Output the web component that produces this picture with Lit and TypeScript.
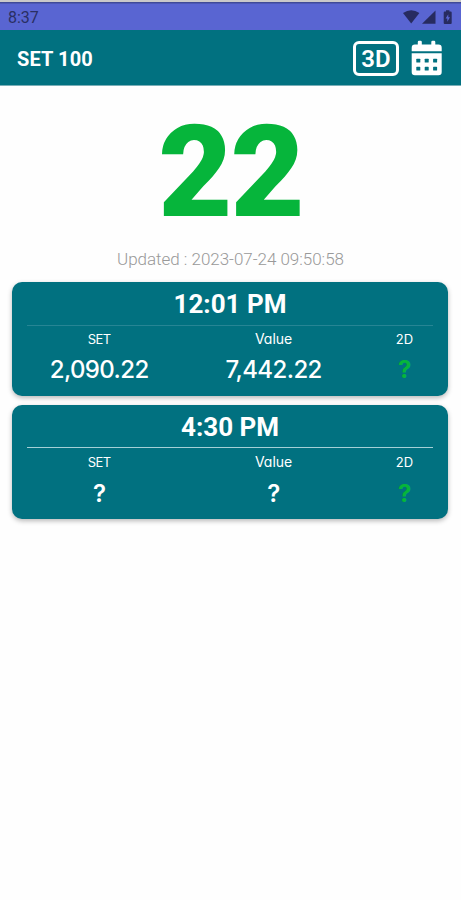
import { LitElement, html, css, svg } from "lit";
import { customElement, property } from "lit/decorators.js";

@customElement("status-bar")
class StatusBar extends LitElement {
  static styles = css`
    :host {
      display: flex;
      box-sizing: border-box;
      height: 30px;
      padding: 4px 7px 0 8px;
      align-items: center;
      justify-content: space-between;
      border-top: 2px solid #c9c8ca;
      background: linear-gradient(#3f4a98 0 1px, #5965d2 2px);
      color: #2a2f63;
      font: 400 16px/22px Roboto, sans-serif;
    }
    .icons {
      display: block;
    }
  `;

  render() {
    return html`
      <span>8:37</span>
      <svg class="icons" width="51" height="16" viewBox="0 0 51 16" fill="#272b60">
        <path d="M0 3Q8.2-2.6 16.4 3L8.2 13.6Z" />
        <path d="M32.5 .4V13.8H19Z" />
        <path
          fill-rule="evenodd"
          d="M43 .2h3.4v1.3h1.3q1 0 1 1V13q0 1-1 1h-6q-1 0-1-1V2.5q0-1 1-1H43ZM45.3 4.2L42.6 8.6h1.7v3.2L47 7.3h-1.7Z"
        />
      </svg>
    `;
  }
}

@customElement("title-bar")
class TitleBar extends LitElement {
  static styles = css`
    :host {
      display: flex;
      box-sizing: border-box;
      height: 56px;
      padding: 0 19px 0 17px;
      align-items: center;
      background: #017180;
      border-bottom: 1px solid #79aeb7;
      color: #fff;
      font-family: Roboto, sans-serif;
    }
    .title {
      flex: 1;
      font-size: 20px;
      font-weight: 700;
      line-height: 28px;
      letter-spacing: 0.12px;
      padding-top: 2px;
    }
    .three-d {
      box-sizing: border-box;
      width: 46px;
      height: 35px;
      margin: 1px 12px 0 0;
      border: 3px solid #fff;
      border-radius: 6px;
      text-align: center;
      font-size: 24px;
      font-weight: 600;
      line-height: 30px;
    }
    .calendar {
      display: block;
    }
  `;

  render() {
    const dots = [18.7, 26.8].flatMap((y) =>
      [5, 13.4, 21.8].map((x) => svg`<rect x=${x} y=${y} width="4" height="3.8" rx=".6" fill="#017180" />`)
    );
    return html`
      <span class="title">SET 100</span>
      <span class="three-d">3D</span>
      <svg class="calendar" width="31" height="37" viewBox="0 0 31 37" fill="#fff">
        <g transform="translate(.3 1)">
          <path
            d="M6.5 4.6V2Q6.5.8 7.7.8H9.3Q10.5.8 10.5 2V4.6H20V2Q20 .8 21.2.8h1.6Q24 .8 24 2V4.6H27.2Q30.4 4.6 30.4 7.8V11.2H.4V7.8Q.4 4.6 3.6 4.6Z"
          />
          <path d="M.4 13.2H30.4V32Q30.4 35.2 27.2 35.2H3.6Q.4 35.2 .4 32Z" />
          ${dots}
        </g>
      </svg>
    `;
  }
}

@customElement("result-card")
class ResultCard extends LitElement {
  @property() time = "";
  @property() set = "?";
  @property() value = "?";
  @property() result = "?";
  @property({ type: Boolean, reflect: true }) pending = false;

  static styles = css`
    :host {
      display: block;
      box-sizing: border-box;
      height: 114px;
      border-radius: 10px;
      background: #017180;
      box-shadow: 0 2px 5px rgba(0, 0, 0, 0.28);
      color: #fff;
      font-family: Inter, "Noto Sans", sans-serif;
      font-feature-settings: "cv11";
      text-align: center;
    }
    .time {
      height: 43px;
      margin: 0 15px;
      border-bottom: 1px solid #278594;
      font: 700 26px/44px Roboto, sans-serif;
    }
    :host([pending]) .time {
      height: 42px;
      border-bottom: 1px solid #a5d0d6;
    }
    .row {
      display: grid;
      grid-template-columns: 2fr 2fr 1fr;
    }
    :host([pending]) .row {
      padding-top: 1px;
    }
    .label {
      padding-top: 3px;
      font-size: 13px;
      line-height: 20px;
    }
    .label.wide {
      font-size: 14px;
    }
    .label.narrow {
      letter-spacing: -0.5px;
    }
    .figure {
      padding-top: 5px;
      font-size: 24px;
      font-weight: 500;
      line-height: 31px;
      letter-spacing: -0.6px;
    }
    :host([pending]) .figure {
      padding-top: 6px;
    }
    .mark {
      font-weight: 600;
    }
    .result {
      color: #06b53b;
      font-weight: 700;
    }
  `;

  private figure(text: string) {
    return html`<div class="figure ${text === "?" ? "mark" : ""}">${text}</div>`;
  }

  render() {
    return html`
      <div class="time">${this.time}</div>
      <div class="row">
        <div><div class="label narrow">SET</div>${this.figure(this.set)}</div>
        <div><div class="label wide">Value</div>${this.figure(this.value)}</div>
        <div><div class="label">2D</div><div class="figure result">${this.result}</div></div>
      </div>
    `;
  }
}

@customElement("app-root")
class AppRoot extends LitElement {
  static styles = css`
    :host {
      display: block;
      min-height: 900px;
      background: #fefefe;
      font-family: Roboto, sans-serif;
    }
    .number {
      padding-top: 11px;
      color: #06b53b;
      font-size: 128px;
      font-weight: 900;
      line-height: 150px;
      letter-spacing: -2px;
      text-align: center;
    }
    .updated {
      padding-bottom: 11px;
      color: #999;
      font-size: 17px;
      font-weight: 300;
      line-height: 24px;
      letter-spacing: -0.03px;
      text-align: center;
    }
    .cards {
      display: grid;
      gap: 9px;
      padding: 0 13px 0 12px;
    }
  `;

  render() {
    return html`
      <status-bar></status-bar>
      <title-bar></title-bar>
      <div class="number">22</div>
      <div class="updated">Updated : 2023-07-24 09:50:58</div>
      <div class="cards">
        <result-card time="12:01 PM" set="2,090.22" value="7,442.22"></result-card>
        <result-card time="4:30 PM" pending></result-card>
      </div>
    `;
  }
}
